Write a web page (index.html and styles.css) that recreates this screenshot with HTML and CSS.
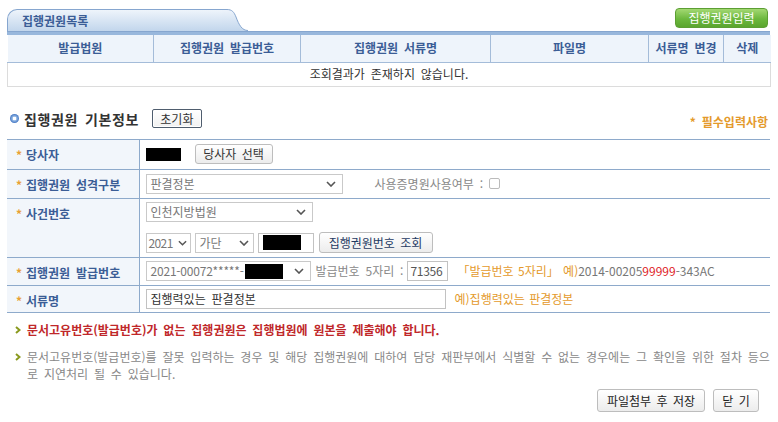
FILE: index.html
```html
<!DOCTYPE html>
<html lang="ko">
<head>
<meta charset="utf-8">
<title>집행권원</title>
<link rel="stylesheet" href="styles.css">
</head>
<body>
<div class="page">
  <div class="tabbar">
    <div class="tab">집행권원목록</div>
    <svg class="tabcurve" viewBox="0 0 26 22" width="26" height="22">
      <defs>
        <linearGradient id="tg" x1="0" y1="0" x2="0" y2="1">
          <stop offset="0" stop-color="#eef4fb"/>
          <stop offset="1" stop-color="#c2d6ec"/>
        </linearGradient>
      </defs>
      <path d="M0 0.5 L5 0.5 C10 0.5 12 3 14 8 C17 16 20 21.5 26 21.5 L26 22 L0 22 Z" fill="url(#tg)"/>
      <path d="M0 0.5 L5 0.5 C10 0.5 12 3 14 8 C17 16 20 21.5 26 21.5" fill="none" stroke="#86a6cf" stroke-width="1"/>
    </svg>
    <div class="spacer"></div>
    <button class="btn-green">집행권원입력</button>
  </div>
  <div class="bar"></div>
  <table class="list">
    <colgroup>
      <col class="c1"><col class="c2"><col class="c3"><col class="c4"><col class="c5"><col class="c6">
    </colgroup>
    <thead>
      <tr>
        <th>발급법원</th>
        <th>집행권원 발급번호</th>
        <th>집행권원 서류명</th>
        <th>파일명</th>
        <th>서류명 변경</th>
        <th>삭제</th>
      </tr>
    </thead>
    <tbody>
      <tr><td class="empty" colspan="6">조회결과가 존재하지 않습니다.</td></tr>
    </tbody>
  </table>

  <div class="section-head">
    <span class="dot"></span>
    <h2 class="title">집행권원 기본정보</h2>
    <button class="btn-reset">초기화</button>
    <span class="spacer"></span>
    <span class="required">* 필수입력사항</span>
  </div>

  <table class="form">
    <colgroup><col class="lcol"><col></colgroup>
    <tr class="r1">
      <th class="lbl"><span class="star">*</span>당사자</th>
      <td class="val">
        <div class="line">
          <span class="redact r-party"></span>
          <button class="btn btn-party">당사자 선택</button>
        </div>
      </td>
    </tr>
    <tr class="r2">
      <th class="lbl"><span class="star">*</span>집행권원 성격구분</th>
      <td class="val">
        <div class="line">
          <div class="select w-kind"><span>판결정본</span><svg class="chev" viewBox="0 0 10 6" width="10" height="6"><path d="M1 1 L5 5 L9 1" fill="none" stroke="#555" stroke-width="1.6"/></svg></div>
          <span class="muted use-label">사용증명원사용여부 :</span>
          <span class="checkbox"></span>
        </div>
      </td>
    </tr>
    <tr class="r3">
      <th class="lbl"><span class="star">*</span>사건번호</th>
      <td class="val">
        <div class="line">
          <div class="select w-court"><span>인천지방법원</span><svg class="chev" viewBox="0 0 10 6" width="10" height="6"><path d="M1 1 L5 5 L9 1" fill="none" stroke="#555" stroke-width="1.6"/></svg></div>
        </div>
        <div class="line line2">
          <div class="select w-year"><span>2021</span><svg class="chev" viewBox="0 0 10 6" width="9" height="6"><path d="M1 1 L5 5 L9 1" fill="none" stroke="#555" stroke-width="1.6"/></svg></div>
          <div class="select w-type"><span>가단</span><svg class="chev" viewBox="0 0 10 6" width="10" height="6"><path d="M1 1 L5 5 L9 1" fill="none" stroke="#555" stroke-width="1.6"/></svg></div>
          <div class="input w-case"><span class="redact r-case"></span></div>
          <button class="btn btn-lookup">집행권원번호 조회</button>
        </div>
      </td>
    </tr>
    <tr class="r4">
      <th class="lbl"><span class="star">*</span>집행권원 발급번호</th>
      <td class="val">
        <div class="line">
          <div class="select w-issue"><span class="issue-txt">2021-00072*****-<span class="redact r-issue"></span></span><svg class="chev" viewBox="0 0 10 6" width="10" height="6"><path d="M1 1 L5 5 L9 1" fill="none" stroke="#555" stroke-width="1.6"/></svg></div>
          <span class="muted five">발급번호 5자리 :</span>
          <div class="input w-five">71356</div>
          <span class="example">「발급번호 5자리」 예)<span class="ex-gray">2014-00205</span><span class="ex-red">99999</span><span class="ex-gray">-343AC</span></span>
        </div>
      </td>
    </tr>
    <tr class="r5">
      <th class="lbl"><span class="star">*</span>서류명</th>
      <td class="val">
        <div class="line">
          <div class="input w-doc dark">집행력있는 판결정본</div>
          <span class="example">예)집행력있는 판결정본</span>
        </div>
      </td>
    </tr>
  </table>

  <ul class="notes">
    <li class="note warn">
      <svg class="arrow" viewBox="0 0 6 8" width="6" height="8"><path d="M1 1 L4.5 4 L1 7" fill="none" stroke="#8a9a1e" stroke-width="2"/></svg>
      <p>문서고유번호(발급번호)가 없는 집행권원은 집행법원에 원본을 제출해야 합니다.</p>
    </li>
    <li class="note info">
      <svg class="arrow" viewBox="0 0 6 8" width="6" height="8"><path d="M1 1 L4.5 4 L1 7" fill="none" stroke="#8a9a1e" stroke-width="2"/></svg>
      <p><span class="ln">문서고유번호(발급번호)를 잘못 입력하는 경우 및 해당 집행권원에 대하여 담당 재판부에서 식별할 수 없는 경우에는 그 확인을 위한 절차 등으</span><span class="ln">로 지연처리 될 수 있습니다.</span></p>
    </li>
  </ul>

  <div class="actions">
    <button class="btn btn-act w-save">파일첨부 후 저장</button>
    <button class="btn btn-act w-close">닫 기</button>
  </div>
</div>
</body>
</html>
```

FILE: styles.css
```css
* { box-sizing: border-box; }
body {
  margin: 0;
  background: #fff;
  font-family: "Noto Sans CJK KR", "Noto Sans", sans-serif;
  font-size: 12px;
  color: #333;
  line-height: 16px;
  word-spacing: 2.5px;
}
button { font-family: inherit; font-size: 12px; cursor: pointer; padding: 0; word-spacing: 2px; }
.page { padding: 0 8px 0 7px; width: 778px; }

/* tab bar */
.tabbar { display: flex; align-items: flex-end; height: 31px; }
.tab {
  width: 215px; height: 22px;
  border: 1px solid #86a6cf; border-right: 0; border-bottom: 0;
  border-top-left-radius: 10px;
  background: linear-gradient(#eef4fb, #c2d6ec);
  padding-left: 14px;
  font-weight: bold; color: #3b5d96; line-height: 21px;
}
.tabcurve { display: block; }
.spacer { flex: 1; }
.btn-green {
  align-self: flex-start; margin-top: 8px; margin-right: 2px;
  width: 93px; height: 20px;
  border: 1px solid #5c9f33; border-radius: 4px;
  background: linear-gradient(#a3d872, #6cb83e 55%, #5aa52e);
  color: #fff; line-height: 18px;
}
.bar { height: 4px; background: #98b7dc; border-top: 1px solid #86a6cf; }

/* list table */
.list { width: 100%; border-collapse: collapse; table-layout: fixed; }
.c1 { width: 146px; } .c2 { width: 147px; } .c3 { width: 190px; }
.c4 { width: 158px; } .c5 { width: 75px; } .c6 { width: 47px; }
.list th {
  height: 27px; padding: 0;
  background: #eef4fb; color: #3b5d96; font-weight: bold;
  border-right: 1px solid #a4bcd9; border-bottom: 1px solid #a4bcd9;
}
.list th:last-child { border-right: 0; }
.list td.empty {
  height: 24px; text-align: center; color: #333;
  border: 1px solid #dcdcdc; border-top: 0;
}

/* section head */
.section-head { display: flex; align-items: center; height: 20px; margin-top: 22px; padding-left: 3px; }
.dot {
  width: 9px; height: 9px; border-radius: 50%;
  background: radial-gradient(circle at 50% 50%, #fff 0 1.5px, #9ec0e8 2px, #3f73c2 4.5px);
  margin-right: 5px;
}
.title { margin: 0; font-size: 14px; font-weight: bold; color: #333; line-height: 18px; letter-spacing: 0.6px; }
.btn-reset {
  margin-left: 13px; width: 50px; height: 19px;
  border: 1px solid #4f5d6e; border-radius: 2px;
  background: linear-gradient(#ffffff, #f1f1f1);
  box-shadow: inset 0 0 0 1px #fff;
  color: #333; line-height: 17px;
}
.required { align-self: flex-end; color: #e49a2c; font-weight: bold; margin-right: 2px; line-height: 14px; }

/* form table */
.form { width: 100%; border-collapse: collapse; margin-top: 10px; border-top: 1px solid #8eaacb; }
.lcol { width: 132px; }
.form tr { border-bottom: 1px solid #8eaacb; }
.r1 { height: 30px; } .r2 { height: 29px; } .r3 { height: 59px; } .r4 { height: 28px; } .r5 { height: 27px; }
.lbl {
  text-align: left; vertical-align: top;
  padding: 7px 0 0 9px;
  background: #f2f6fb; border-right: 1px solid #8eaacb;
  color: #3b5d96; font-weight: bold; white-space: nowrap;
}
.star { display: inline-block; width: 10px; color: #e8a133; font-weight: bold; }
.val { padding: 0 0 0 6px; vertical-align: middle; }
.line { display: flex; align-items: center; }
.line2 { margin-top: 10px; }

.redact { display: inline-block; background: #000; }
.r-party { width: 35px; height: 13px; }
.r-case { width: 38px; height: 15px; }
.r-issue { width: 38px; height: 15px; vertical-align: middle; margin-left: 1px; }

.select {
  display: flex; align-items: center; justify-content: space-between;
  height: 20px; border: 1px solid #c9c9c9; background: #fff;
  padding: 0 6px 0 4px; color: #777;
}
.chev { display: block; flex: none; }
.input {
  display: flex; align-items: center;
  height: 20px; border: 1px solid #c2c2c2; background: #fff;
  padding: 0 4px; color: #555;
}
.input.dark { color: #333; }
.w-kind { width: 197px; }
.w-court { width: 167px; }
.w-year { width: 45px; padding: 0 3px 0 2px; letter-spacing: -0.6px; }
.w-type { width: 59px; margin-left: 4px; padding-right: 4px; }
.w-case { width: 56px; margin-left: 4px; }
.w-issue { width: 165px; }
.w-five { width: 41px; padding: 0 2px; letter-spacing: -0.3px; }
.w-doc { width: 300px; }
.issue-txt { display: flex; align-items: center; white-space: nowrap; letter-spacing: -0.2px; }

.muted { color: #888; }
.use-label { margin-left: 32px; }
.checkbox { display: inline-block; width: 11px; height: 11px; border: 1px solid #bbb; border-radius: 2px; margin-left: 6px; }
.five { margin-left: 5px; margin-right: 4px; }
.example { margin-left: 9px; color: #e49a2c; white-space: nowrap; word-spacing: 1px; }
.ex-gray { color: #777; }
.ex-red { color: #e0242a; }

.btn {
  border: 1px solid #bdbdbd; border-radius: 3px;
  background: linear-gradient(#ffffff, #ececec);
  color: #333;
}
.btn-party { margin-left: 14px; width: 78px; height: 20px; line-height: 18px; }
.btn-lookup { margin-left: 5px; width: 114px; height: 21px; line-height: 19px; color: #1f3a63; }

/* notes */
.notes { list-style: none; margin: 8px 0 0; padding: 0 0 0 8px; }
.note { display: flex; align-items: flex-start; }
.note p { margin: 0; line-height: 17px; }
.arrow { flex: none; margin-top: 5px; margin-right: 6px; display: block; }
.warn { color: #c0282a; font-weight: bold; }
.info { margin-top: 10px; color: #888; }
.ln { display: block; white-space: nowrap; }

/* actions */
.actions { display: flex; justify-content: flex-end; gap: 8px; margin-top: 7px; padding-right: 11px; }
.btn-act { height: 23px; line-height: 21px; color: #222; }
.w-save { width: 108px; }
.w-close { width: 46px; }
```
